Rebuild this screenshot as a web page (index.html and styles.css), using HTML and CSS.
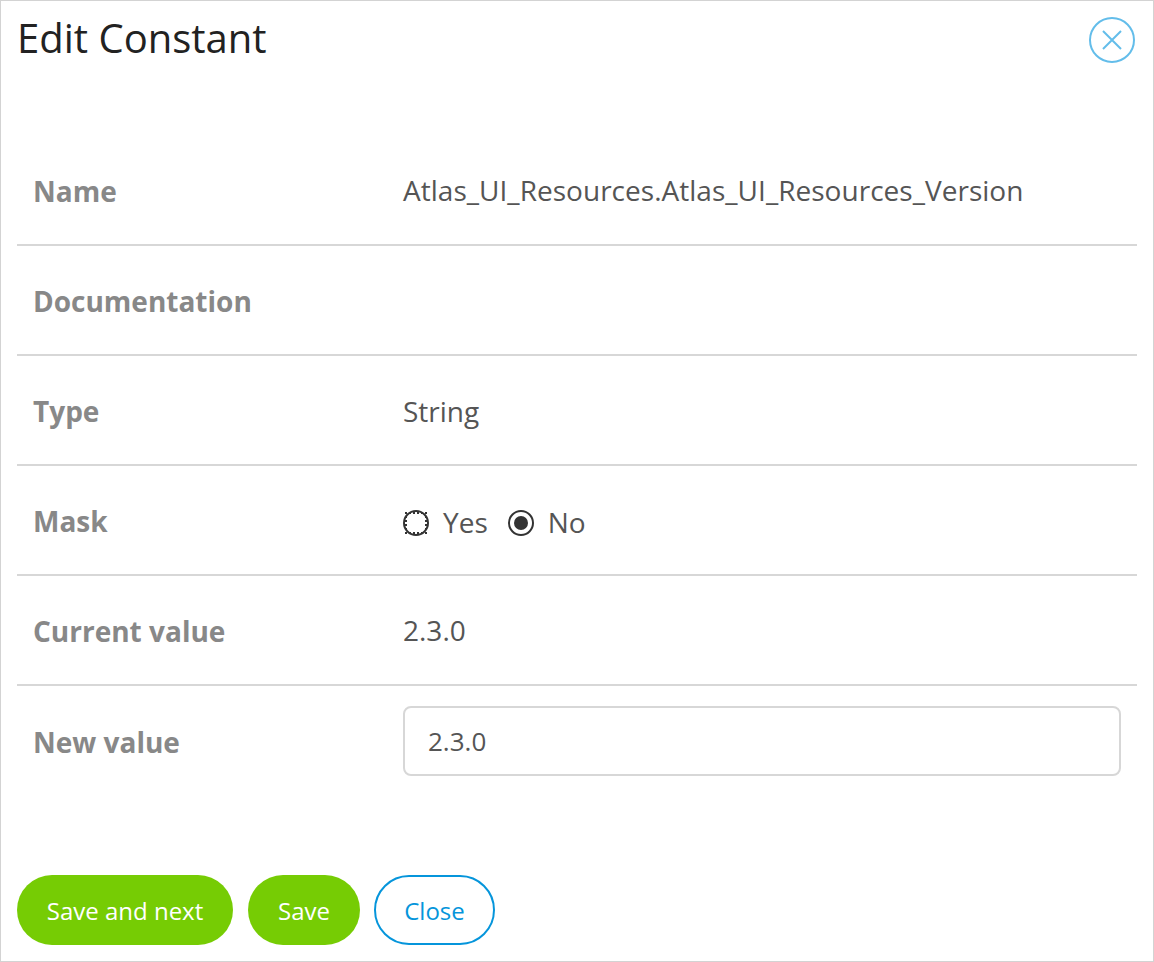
FILE: index.html
```html
<!DOCTYPE html>
<html lang="en">
<head>
<meta charset="utf-8">
<title>Edit Constant</title>
<link rel="stylesheet" href="styles.css">
</head>
<body>
<main class="dialog">
  <header class="header">
    <h1 class="title">Edit Constant</h1>
    <button class="dismiss" aria-label="Close dialog">
      <svg width="46" height="46" viewBox="0 0 46 46" fill="none" stroke="#63bdea" stroke-width="2"><circle cx="23" cy="23" r="22"/><path d="M14 14L32 32M32 14L14 32"/></svg>
    </button>
  </header>
  <div class="rows">
    <div class="row"><span class="label">Name</span><span class="value name">Atlas_UI_Resources.Atlas_UI_Resources_Version</span></div>
    <div class="row"><span class="label">Documentation</span></div>
    <div class="row"><span class="label">Type</span><span class="value type">String</span></div>
    <div class="row"><span class="label">Mask</span>
      <span class="value options">
        <svg class="radio" width="26" height="26" viewBox="0 0 26 26" fill="none" stroke="#333" stroke-width="2"><circle cx="13" cy="13" r="12"/><path d="M2 3H24M2 23H24" stroke-dasharray="2 2"/><path d="M3 2V24M23 2V24" stroke-dasharray="2 2"/></svg>
        <span class="yes">Yes</span>
        <svg class="radio" width="26" height="26" viewBox="0 0 26 26"><circle cx="13" cy="13" r="12" fill="none" stroke="#333" stroke-width="2"/><circle cx="13" cy="13" r="7" fill="#333"/></svg>
        <span>No</span>
      </span>
    </div>
    <div class="row"><span class="label">Current value</span><span class="value">2.3.0</span></div>
    <div class="row last"><span class="label">New value</span><input class="input" value="2.3.0" aria-label="New value"></div>
  </div>
  <footer class="actions">
    <button class="button next">Save and next</button>
    <button class="button save">Save</button>
    <button class="button close">Close</button>
  </footer>
</main>
</body>
</html>
```
FILE: styles.css
```css
* { box-sizing: border-box; }
body { margin: 0; font-family: "Open Sans", sans-serif; background: #fff; }
.dialog { width: 1154px; height: 962px; border: 1px solid #d3d3d3; padding: 0 16px; }
.header { display: flex; justify-content: space-between; height: 135px; padding-right: 2px; }
.title { margin: 9px 0 0; font-size: 40px; line-height: 56px; font-weight: 400; color: #222; }
.dismiss { width: 46px; height: 46px; margin-top: 16px; padding: 0; border: 0; background: none; }
.dismiss svg { display: block; }
.row { display: flex; align-items: center; height: 110px; padding: 0 16px; border-bottom: 2px solid #d7d7d7; font-size: 28px; line-height: 40px; color: #555; }
.label { width: 370px; padding-top: 2px; font-weight: 700; color: #888; }
.name { letter-spacing: 0.025px; }
.type { padding-top: 2px; }
.options { display: flex; align-items: center; padding-top: 4px; }
.radio { margin: 1px 14px 0 0; }
.yes { margin-right: 20px; }
.last { border: 0; }
.input { width: 718px; height: 70px; padding: 0 23px; border: 2px solid #d7d7d7; border-radius: 8px; font: 26px "Open Sans", sans-serif; color: #555; }
.actions { display: flex; margin-top: 79px; }
.button { height: 70px; padding: 0; border: 0; border-radius: 35px; background: #76cc04; color: #fff; font: 24px "Open Sans", sans-serif; }
.next { width: 216px; }
.save { width: 112px; margin: 0 14px 0 15px; }
.close { width: 121px; border: 2px solid #0595db; background: #fff; color: #0595db; }
```
